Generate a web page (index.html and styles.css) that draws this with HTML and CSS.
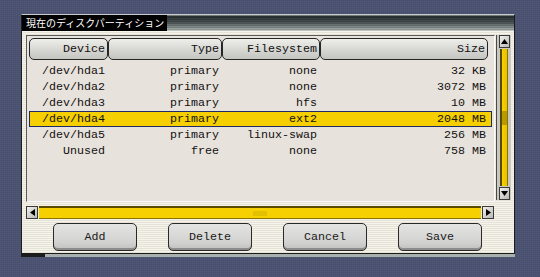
FILE: index.html
```html
<!DOCTYPE html>
<html lang="ja">
<head>
  <meta charset="UTF-8" />
  <title>現在のディスクパーティション</title>
  <link rel="stylesheet" href="styles.css">
</head>
<body>
  <div class="window">
    <div class="titlebar">
      <span class="title">現在のディスクパーティション</span>
      <span class="title-fill"></span>
    </div>

    <div class="main">
      <div class="list">
        <div class="head">
          <div class="hcol">Device</div>
          <div class="hcol">Type</div>
          <div class="hcol">Filesystem</div>
          <div class="hcol">Size</div>
        </div>
        <div class="row"><span>/dev/hda1</span><span>primary</span><span>none</span><span>32 KB</span></div>
        <div class="row"><span>/dev/hda2</span><span>primary</span><span>none</span><span>3072 MB</span></div>
        <div class="row"><span>/dev/hda3</span><span>primary</span><span>hfs</span><span>10 MB</span></div>
        <div class="row selected"><span>/dev/hda4</span><span>primary</span><span>ext2</span><span>2048 MB</span></div>
        <div class="row"><span>/dev/hda5</span><span>primary</span><span>linux-swap</span><span>256 MB</span></div>
        <div class="row"><span>Unused</span><span>free</span><span>none</span><span>758 MB</span></div>
      </div>

      <div class="vscroll">
        <div class="arrow">
          <svg width="9" height="9" viewBox="0 0 9 9"><polygon points="4.5,2 8,7 1,7" fill="#000"/></svg>
        </div>
        <div class="vtrough"><span class="vgrip"></span></div>
        <div class="arrow">
          <svg width="9" height="9" viewBox="0 0 9 9"><polygon points="1,2 8,2 4.5,7" fill="#000"/></svg>
        </div>
      </div>
    </div>

    <div class="hscroll">
      <div class="arrow">
        <svg width="9" height="9" viewBox="0 0 9 9"><polygon points="2,4.5 7,1 7,8" fill="#000"/></svg>
      </div>
      <div class="htrough"><span class="hgrip"></span></div>
      <div class="arrow">
        <svg width="9" height="9" viewBox="0 0 9 9"><polygon points="2,1 7,4.5 2,8" fill="#000"/></svg>
      </div>
    </div>

    <div class="buttons">
      <button class="btn">Add</button>
      <button class="btn">Delete</button>
      <button class="btn">Cancel</button>
      <button class="btn">Save</button>
    </div>
  </div>
  <div class="window-foot"><span class="foot-dark"></span><span class="foot-light"></span></div>
</body>
</html>
```

FILE: styles.css
```css
* {
  box-sizing: border-box;
  margin: 0;
  padding: 0;
}

body {
  width: 540px;
  height: 277px;
  overflow: hidden;
  padding: 14px 0 0 21px;
  background-color: #4b5272;
  background-image: repeating-linear-gradient(90deg, rgba(255,255,255,0.03) 0 1px, transparent 1px 2px),
                    repeating-linear-gradient(0deg, rgba(0,0,0,0.05) 0 1px, transparent 1px 2px);
  font-family: "Liberation Mono", "DejaVu Sans Mono", monospace;
  font-size: 11.67px;
  color: #111;
}

.window {
  width: 494px;
  height: 240px;
  border: 1px solid #1c1c1c;
  border-top-color: #c8ccc8;
  background: repeating-linear-gradient(180deg, #f5f3ea 0 1px, #e5e3d8 1px 2px);
}

.titlebar {
  display: flex;
  height: 16px;
}

.title {
  width: 145px;
  padding-left: 4px;
  background: #000;
  color: #fff;
  font-family: "Noto Sans CJK JP", sans-serif;
  font-size: 10px;
  line-height: 16px;
}

.title-fill {
  flex: 1;
  background:
    repeating-linear-gradient(180deg, rgba(0,0,0,0.18) 0 1px, transparent 1px 2px),
    linear-gradient(180deg, #8a9494 0 1px, #263030 1px, #4a5454 45%, #9aa4a2 85%, #c4ccca);
}

.main {
  display: flex;
  gap: 1px;
  margin: 4px 0 0 4px;
}

.list {
  width: 469px;
  height: 167px;
  padding: 2px;
  border: 1px solid #5a5a5a;
  border-right-color: #fafafa;
  border-bottom-color: #fafafa;
  background: #e8e2dc;
}

.head {
  display: grid;
  grid-template-columns: 79px 114px 98px 168px;
  height: 22px;
  margin-bottom: 3px;
}

.hcol {
  border: 1px solid #262626;
  border-radius: 5px;
  background: linear-gradient(180deg, #eeeeea, #d4d4d0 60%, #c4c4c0);
  text-align: right;
  padding-right: 2px;
  line-height: 20px;
  color: #111;
}

.row {
  display: grid;
  grid-template-columns: 79px 114px 98px 168px;
  height: 16px;
  line-height: 16px;
}

.row span {
  text-align: right;
  padding-right: 3px;
  white-space: nowrap;
}

.row span:last-child {
  padding-right: 2px;
}

.row.selected {
  background: #f6cf00;
  outline: 1px solid #1d2a66;
  outline-offset: -1px;
}

.vscroll {
  display: flex;
  flex-direction: column;
  width: 15px;
  height: 165px;
  padding: 0 2px;
  border-left: 1px solid #4a4a4a;
  background: #c8c8c0;
}

.arrow {
  display: flex;
  align-items: center;
  justify-content: center;
  width: 12px;
  height: 12px;
  flex-shrink: 0;
  border: 1px solid #3a3a3a;
  background: linear-gradient(135deg, #f0f0ec, #b8b8b4);
}

.vscroll .arrow {
  width: 11px;
  height: 13px;
}

.vtrough {
  flex: 1;
  display: flex;
  align-items: center;
  justify-content: center;
  margin: 1px 1px;
  border-left: 2px solid #5a4a00;
  border-right: 1px solid #8a7400;
  background: linear-gradient(90deg, #f6d000, #e8c000);
}

.vgrip {
  width: 5px;
  height: 14px;
  background: radial-gradient(circle, #9a8000 0.6px, transparent 0.9px) 0 0 / 2px 2px;
}

.hscroll {
  display: flex;
  width: 468px;
  height: 13px;
  margin: 4px 0 0 4px;
}

.hscroll .arrow {
  height: 13px;
}

.htrough {
  flex: 1;
  display: flex;
  align-items: center;
  justify-content: center;
  margin: 0 1px;
  border-top: 2px solid #5a4a00;
  border-bottom: 1px solid #8a7400;
  background: #f6d000;
}

.hgrip {
  width: 14px;
  height: 5px;
  opacity: 0.6;
  background: radial-gradient(circle, #c8a800 0.6px, transparent 0.9px) 0 0 / 2px 2px;
}

.buttons {
  display: flex;
  gap: 31px;
  margin-top: 4px;
  padding-left: 31px;
}

.btn {
  width: 84px;
  height: 28px;
  border: 1px solid #2a2a2a;
  border-radius: 5px;
  background: linear-gradient(180deg, #e4e4e2, #d2d2d0 70%, #c0c0be);
  box-shadow: inset 0 -2px 0 #8c8c8a;
  font-family: "Liberation Mono", "DejaVu Sans Mono", monospace;
  font-size: 11.67px;
  color: #1a1a1a;
  padding-bottom: 1px;
}

.window-foot {
  display: flex;
  width: 494px;
  height: 3px;
}

.foot-dark {
  width: 24px;
  background: #1c1c1c;
}

.foot-light {
  flex: 1;
  background: #a8b0ae;
}
```
